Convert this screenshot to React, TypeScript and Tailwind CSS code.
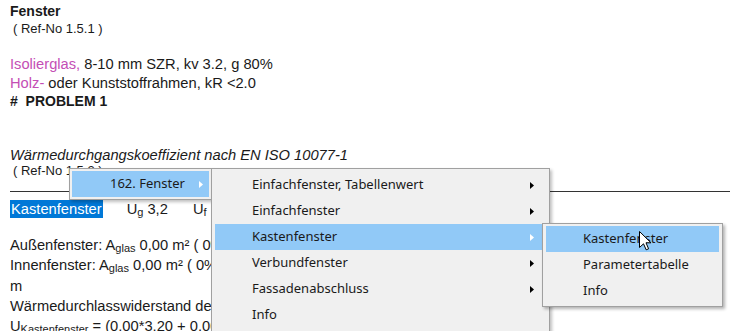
import React from "react";

type Item = { label: string; sub?: boolean; active?: boolean };

const level2: Item[] = [
  { label: "Einfachfenster, Tabellenwert", sub: true },
  { label: "Einfachfenster", sub: true },
  { label: "Kastenfenster", sub: true, active: true },
  { label: "Verbundfenster", sub: true },
  { label: "Fassadenabschluss", sub: true },
  { label: "Info" },
];

const level3: Item[] = [
  { label: "Kastenfenster", active: true },
  { label: "Parametertabelle" },
  { label: "Info" },
];

function Arrow({ white }: { white?: boolean }) {
  return (
    <svg width="4" height="7" viewBox="0 0 4 7" className="shrink-0">
      <path d="M0 0 L4 3.5 L0 7 Z" fill={white ? "#ffffff" : "#000000"} />
    </svg>
  );
}

function MenuRow({ item, indent }: { item: Item; indent: string }) {
  return (
    <div
      className={`flex h-[26px] items-center pr-[12px] ${indent} ${
        item.active ? "bg-[#91c9f7]" : ""
      }`}
    >
      <span className="flex-1 whitespace-nowrap">{item.label}</span>
      {item.sub && <Arrow white={item.active} />}
    </div>
  );
}

function Cursor() {
  return (
    <svg width="13" height="20" viewBox="0 0 13 20" className="absolute left-[639px] top-[231px]">
      <path
        d="M0.5 0.5 L0.5 16.5 L4.5 12.8 L7.2 18.8 L9.6 17.8 L7 11.8 L12 11.8 Z"
        fill="#ffffff"
        stroke="#000000"
        strokeWidth="1"
        strokeLinejoin="round"
      />
    </svg>
  );
}

export default function App() {
  const pink = "text-[#c44eb5]";
  const sub = "text-[11px]";
  return (
    <div className="relative h-[331px] w-[743px] overflow-hidden bg-white font-['Liberation_Sans',Arial,sans-serif] text-[14.7px] text-[#1a1a1a]">
      <div className="whitespace-nowrap pl-[10px] pr-[13px] pt-[2px]">
        <div className="text-[14px] font-bold leading-[19px]">Fenster</div>
        <div className="pl-[3px] text-[13px] leading-[16px]">( Ref-No 1.5.1 )</div>
        <div className="h-[18px]" />
        <div className="leading-[18.5px]">
          <span className={pink}>Isolierglas,</span> 8-10 mm SZR, kv 3.2, g 80%
        </div>
        <div className="leading-[18.5px]">
          <span className={pink}>Holz-</span> oder Kunststoffrahmen, kR &lt;2.0
        </div>
        <div className="text-[14px] font-bold leading-[18.5px]">#&nbsp; PROBLEM 1</div>
        <div className="h-[35px]" />
        <div className="italic leading-[18px]">Wärmedurchgangskoeffizient nach EN ISO 10077-1</div>
        <div className="pl-[3px] text-[13px] leading-[14px]">( Ref-No 1.5.2 )</div>
        <div className="h-[14px] border-b border-[#333333]" />
        <div className="flex h-[26px] items-end">
          <span className="inline-block h-[18px] bg-[#0078d7] pl-[1px] pr-[1px] leading-[18px] text-white">
            Kastenfenster
          </span>
          <span className="ml-[24px] leading-[18px]">
            U<sub className={sub}>g</sub> 3,2
          </span>
          <span className="ml-[25px] leading-[18px]">
            U<sub className={sub}>f</sub> 1,8
          </span>
        </div>
        <div className="h-[17px]" />
        <div className="leading-[20px]">
          Außenfenster: A<sub className={sub}>glas</sub> 0,00 m² ( 0% ), A
          <sub className={sub}>f</sub> 0,00 m²
        </div>
        <div className="leading-[21px]">
          Innenfenster: A<sub className={sub}>glas</sub> 0,00 m² ( 0% ), A
          <sub className={sub}>f</sub> 0,00 m²
        </div>
        <div className="leading-[20px]">m</div>
        <div className="leading-[20px]">
          Wärmedurchlasswiderstand des Zwischenraums R<sub className={sub}>s</sub> 0,18 m²K/W, Luft, Flow
        </div>
        <div className="leading-[20px]">
          U<sub className={sub}>Kastenfenster</sub> = (0,00*3,20 + 0,00*1,80) / 0,00
        </div>
      </div>

      {/* level 1 menu */}
      <div className="absolute left-[69px] top-[168px] w-[143px] border border-[#a0a0a0] bg-[#f0f0f0] p-[2px] font-['Noto_Sans',sans-serif] text-[13px] text-[#1a1a1a] shadow-[2px_2px_3px_rgba(0,0,0,0.25)]">
        <div className="flex h-[26px] items-center bg-[#91c9f7] pl-[38px] pr-[6px]">
          <span className="flex-1">162. Fenster</span>
          <Arrow white />
        </div>
      </div>

      {/* level 2 menu */}
      <div className="absolute left-[211px] top-[168px] w-[339px] border border-[#a0a0a0] bg-[#f0f0f0] px-[3px] py-[3px] font-['Noto_Sans',sans-serif] text-[13px] text-[#1a1a1a] shadow-[2px_2px_3px_rgba(0,0,0,0.25)]">
        {level2.map((it) => (
          <MenuRow key={it.label} item={it} indent="pl-[37px]" />
        ))}
      </div>

      {/* level 3 menu */}
      <div className="absolute left-[542px] top-[223px] w-[181px] border border-[#a0a0a0] bg-[#f0f0f0] px-[3px] py-[2px] font-['Noto_Sans',sans-serif] text-[13px] text-[#1a1a1a] shadow-[2px_2px_3px_rgba(0,0,0,0.3)]">
        {level3.map((it) => (
          <MenuRow key={it.label} item={it} indent="pl-[37px]" />
        ))}
      </div>

      <Cursor />
    </div>
  );
}
